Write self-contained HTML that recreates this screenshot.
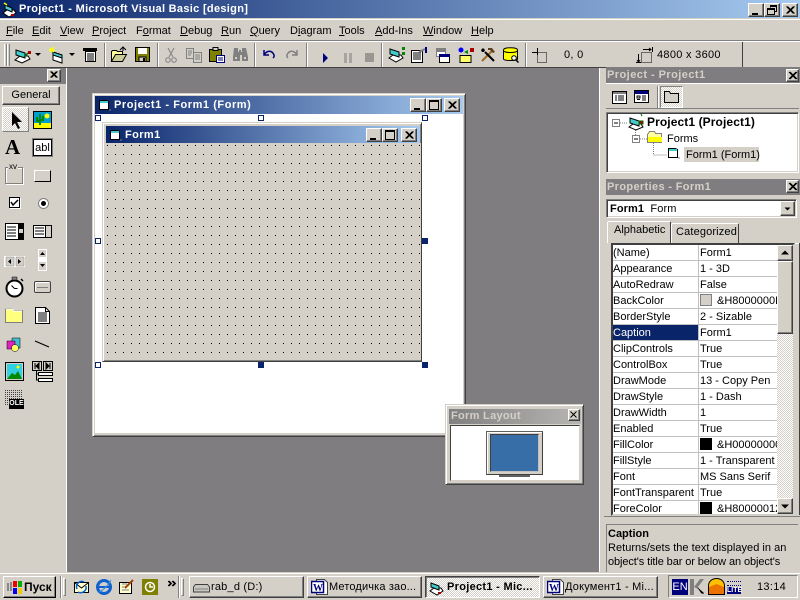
<!DOCTYPE html>
<html><head><meta charset="utf-8"><style>
*{box-sizing:border-box}
html,body{margin:0;padding:0;width:800px;height:600px;overflow:hidden;background:#d4d0c8;font:11px "Liberation Sans","Noto Sans CJK SC",sans-serif;color:#000}
.a{position:absolute}
.t{position:absolute;white-space:nowrap;line-height:14px}
.b{font-weight:bold}
u{text-decoration:underline}
.up{background:#d4d0c8;border:1px solid;border-color:#fff #404040 #404040 #fff;box-shadow:inset -1px -1px 0 #808080}
.sunk{border:1px solid;border-color:#808080 #fff #fff #808080;box-shadow:inset 1px 1px 0 #404040,inset -1px -1px 0 #d4d0c8}
.cb{position:absolute;width:16px;height:14px;background:#d4d0c8;border:1px solid;border-color:#fff #404040 #404040 #fff;box-shadow:inset -1px -1px 0 #808080}
.cb svg,.ic svg{display:block}
.sep{position:absolute;width:2px;border-left:1px solid #808080;border-right:1px solid #fff}
.ic{position:absolute}
.h{position:absolute;width:6px;height:6px;border:1px solid #0a246a;background:#fff}
.hf{background:#0a246a}
.r{position:absolute;left:613px;width:164px;height:16px;border-bottom:1px solid #c0c0c0;background:#fff}
.r b{position:absolute;left:0;top:0;width:86px;height:15px;font-weight:normal;border-right:1px solid #c0c0c0;padding:2px 0 0 0;line-height:13px;white-space:nowrap;overflow:hidden}
.r i{position:absolute;left:87px;top:0;width:77px;height:15px;font-style:normal;padding-top:2px;line-height:13px;white-space:nowrap;overflow:hidden}
.sw{position:absolute;left:0;top:1px;width:12px;height:12px;border:1px solid #808080}
.r i.c{padding-left:17px}
.tb{position:absolute;top:576px;height:22px;background:#d4d0c8;border:1px solid;border-color:#fff #404040 #404040 #fff;box-shadow:inset -1px -1px 0 #808080;white-space:nowrap;overflow:hidden;line-height:20px}
</style></head><body>

<!-- main title -->
<div class="a" style="left:0;top:0;width:800px;height:18px;background:linear-gradient(90deg,#0a246a,#a6caf0)"></div>
<svg class="a" style="left:2px;top:2px" width="16" height="16" viewBox="0 0 16 16"><path d="M1 11L5 8h7l2 3-7 4z" fill="#fff" stroke="#000"/><path d="M3 3l7 3v4l-7-3z" fill="#4cc" stroke="#000"/><path d="M9 12h3v2H9z" fill="#a00"/><path d="M2 1l3 2" stroke="#ff0" stroke-width="1.5"/></svg>
<div class="t b" style="left:19px;top:2px;color:#fff;font-size:11px;letter-spacing:.31px">Project1 - Microsoft Visual Basic [design]</div>
<div class="cb" style="left:748px;top:3px"><svg width="14" height="12"><path d="M3 9h6v2H3z" fill="#000"/></svg></div>
<div class="cb" style="left:764px;top:3px"><svg width="14" height="12"><path d="M5.500 3.500V1.500h6v6h-2M2.500 4.500h7v6h-7z M5 2.500h6M3 5.500h6" fill="none" stroke="#000"/></svg></div>
<div class="cb" style="left:782px;top:3px"><svg width="14" height="12"><path d="M3.500 2.500l7 7M4.500 2.500l7 7M10.500 2.500l-7 7M11.500 2.500l-7 7" stroke="#000"/></svg></div>

<!-- menu -->
<div class="a" style="left:0;top:18px;width:800px;height:1px;background:#d4d0c8"></div>
<div class="a" style="left:0;top:19px;width:800px;height:1px;background:#fff"></div>
<div class="a" style="left:0;top:40px;width:800px;height:1px;background:#808080"></div>
<div class="a" style="left:0;top:41px;width:800px;height:1px;background:#fff"></div>
<div class="t" style="left:6px;top:24px"><u>F</u>ile</div>
<div class="t" style="left:32px;top:24px"><u>E</u>dit</div>
<div class="t" style="left:60px;top:24px"><u>V</u>iew</div>
<div class="t" style="left:92px;top:24px"><u>P</u>roject</div>
<div class="t" style="left:136px;top:24px">F<u>o</u>rmat</div>
<div class="t" style="left:180px;top:24px"><u>D</u>ebug</div>
<div class="t" style="left:221px;top:24px"><u>R</u>un</div>
<div class="t" style="left:250px;top:24px"><u>Q</u>uery</div>
<div class="t" style="left:290px;top:24px">D<u>i</u>agram</div>
<div class="t" style="left:339px;top:24px"><u>T</u>ools</div>
<div class="t" style="left:375px;top:24px"><u>A</u>dd-Ins</div>
<div class="t" style="left:423px;top:24px"><u>W</u>indow</div>
<div class="t" style="left:471px;top:24px"><u>H</u>elp</div>

<!-- toolbar -->
<div class="a" style="left:4px;top:44px;width:3px;height:22px;border-left:1px solid #fff;border-right:1px solid #808080"></div>
<div class="a" style="left:7px;top:44px;width:3px;height:22px;border-left:1px solid #fff;border-right:1px solid #808080"></div>
<div class="a" style="left:0;top:67px;width:800px;height:1px;background:#404040"></div>
<div class="a" style="top:42px;width:1px;height:25px;background:#404040;left:742px"></div>

<svg class="ic" style="left:13px;top:45px" width="20" height="20" viewBox="0 0 20 20"><path d="M2 15l5-4h8l2 3-8 4z" fill="#fff" stroke="#000"/><path d="M3 5l9 3v5l-9-3z" fill="#4cc" stroke="#000"/><path d="M11 12l4-4" stroke="#060" stroke-width="1.500"/><path d="M15 6h3v3h-3z" fill="#a00"/></svg>
<svg class="ic" style="left:35px;top:53px" width="7" height="4"><path d="M0 0h6L3 3z"/></svg>
<svg class="ic" style="left:47px;top:45px" width="20" height="20" viewBox="0 0 20 20"><path d="M6 7l9 3v8l-9-3z" fill="#fff" stroke="#000"/><path d="M6 7l9 3v3l-9-3z" fill="#4cc" stroke="#000"/><path d="M3 3l4 4M7 2L3 7M2 5h6" stroke="#ff0" stroke-width="1.300"/></svg>
<svg class="ic" style="left:69px;top:53px" width="7" height="4"><path d="M0 0h6L3 3z"/></svg>
<svg class="ic" style="left:82px;top:47px" width="16" height="16"><path d="M1.500 1.500h13v2h-13z" fill="#000" stroke="#000"/><path d="M3.500 4.500h10v10h-10z" fill="#fff" stroke="#000"/><path d="M5 7h7M5 9h7M5 11h7M5 13h7" stroke="#000"/></svg>
<div class="sep" style="left:104px;top:43px;height:24px"></div>
<svg class="ic" style="left:110px;top:46px" width="18" height="17"><path d="M1.500 15.500v-10l1-1h4l1 1h5v3" fill="#ff9" stroke="#000"/><path d="M1.500 15.500h11l4-7h-11z" fill="#cc9" stroke="#000"/><path d="M10 4l3-3 3 3M13 1v4" fill="none" stroke="#000"/></svg>
<svg class="ic" style="left:135px;top:47px" width="15" height="15"><path d="M.5.500h14v14H.5z" fill="#808000" stroke="#000"/><path d="M3 1h9v6H3z" fill="#fff"/><path d="M4 10h7v4.500H4z" fill="#d4d0c8" stroke="#000"/><path d="M8 11h2v3H8z"/></svg>
<div class="sep" style="left:157px;top:43px;height:24px"></div>
<svg class="ic" style="left:165px;top:47px" width="12" height="16" stroke="#808080" fill="none"><path d="M3 1l5 9M9 1L4 10"/><circle cx="3" cy="13" r="2.300"/><circle cx="9" cy="13" r="2.300"/></svg>
<svg class="ic" style="left:186px;top:47px" width="16" height="16" stroke="#808080" fill="#d4d0c8"><path d="M.5 1.500h7v10h-7zM7.500 5.500h8v10h-8z"/><path d="M2 4h4M2 6h4M2 8h3M9 8h5M9 10h5M9 12h5" stroke-width="1"/></svg>
<svg class="ic" style="left:209px;top:47px" width="16" height="16"><path d="M.5 2.500h12v12H.5z" fill="#808000" stroke="#000"/><path d="M4 .5h5v3H4z" fill="#d4d0c8" stroke="#000"/><path d="M7.500 8.500h8v7h-8z" fill="#fff" stroke="#00007b"/><path d="M9 11h5M9 13h5" stroke="#00007b"/></svg>
<svg class="ic" style="left:232px;top:47px" width="16" height="15" fill="#808080"><path d="M2 1h4v4h1v-2h2v2h1V1h4l2 9v4h-6V8H8v6H1v-4z"/><path d="M3 10h2v2H3zM12 10h2v2h-2z" fill="#d4d0c8"/></svg>
<div class="sep" style="left:254px;top:43px;height:24px"></div>
<svg class="ic" style="left:262px;top:48px" width="14" height="13" fill="none" stroke="#00007b" stroke-width="1.500"><path d="M2 2v5h5M2 7c3-5 8-5 10 0 .5 1 0 2-1 3"/></svg>
<svg class="ic" style="left:285px;top:48px" width="14" height="13" fill="none" stroke="#808080" stroke-width="1.500"><path d="M12 2v5H7M12 7C9 2 4 2 2 7c-.5 1 0 2 1 3"/></svg>
<div class="sep" style="left:306px;top:43px;height:24px"></div>
<svg class="ic" style="left:322px;top:53px" width="7" height="10"><path d="M1 0l5 5-5 5z" fill="#00007b"/></svg>
<svg class="ic" style="left:344px;top:53px" width="9" height="10"><path d="M0 0h3v10H0zM5 0h3v10H5z" fill="#a8a5a0"/></svg>
<div class="a" style="left:365px;top:53px;width:9px;height:9px;background:#9a9792"></div>
<div class="sep" style="left:381px;top:43px;height:24px"></div>
<svg class="ic" style="left:388px;top:45px" width="18" height="18"><path d="M1 13l4-3h8l2 3-7 4z" fill="#fff" stroke="#000"/><path d="M2 4l9 3v5L2 9z" fill="#4cc" stroke="#000"/><path d="M14 2h3v3h-3zM14 7h3v3h-3z" fill="#080"/></svg>
<svg class="ic" style="left:411px;top:47px" width="17" height="16"><path d="M.5 3.500h11v12H.5z" fill="#fff" stroke="#000"/><path d="M2 6h8M2 8h8M2 10h8M2 12h8" stroke="#000"/><path d="M8 5l6-3" stroke="#808080" stroke-width="2"/><path d="M14 0h2v6h-2z" fill="#00007b"/></svg>
<svg class="ic" style="left:435px;top:48px" width="15" height="15"><path d="M1.500.5h9v3h-9z" fill="#808080" stroke="#808080"/><path d="M1.500 3.500h9v5h-9z" fill="#fff" stroke="#808080"/><path d="M4.500 6.500h10v8h-10z" fill="#fff" stroke="#000"/><path d="M4 6h11v3H4z" fill="#00007b"/></svg>
<svg class="ic" style="left:457px;top:47px" width="17" height="16"><circle cx="4" cy="3" r="2.500" fill="#00f"/><path d="M13 1h4v4h-4z" fill="#a00"/><path d="M3 8.500h11v7H3z" fill="#ff6" stroke="#000"/><path d="M7 5l4-2v4z" fill="#080"/></svg>
<svg class="ic" style="left:480px;top:47px" width="16" height="15"><path d="M2 14L12 4" stroke="#a06a20" stroke-width="2"/><path d="M8 1h4l3 4-2 1-3-3H8z" fill="#604020"/><path d="M14 14L5 5" stroke="#000" stroke-width="2"/><path d="M1 3l2-2 2 2-1 2-2 0z" fill="#000"/></svg>
<svg class="ic" style="left:503px;top:47px" width="16" height="16"><path d="M.5 3c0-3 14-3 14 0v9c0 2-14 2-14 0z" fill="#ff0" stroke="#000"/><path d="M.5 4c2 2 12 2 14 0" fill="none" stroke="#000"/><circle cx="11" cy="11" r="2.300" fill="#fff" stroke="#000"/><path d="M13 13l2.500 2.500" stroke="#000" stroke-width="1.500"/></svg>
<div class="sep" style="left:525px;top:43px;height:24px"></div>
<svg class="ic" style="left:532px;top:48px" width="16" height="16"><path d="M5.500 0v7M0 4.500h5" stroke="#000"/><path d="M5.500 4.500h9v10h-9z" fill="none" stroke="#000" stroke-dasharray="1 1"/></svg>
<div class="t" style="left:564px;top:48px;letter-spacing:.3px">0, 0</div>
<svg class="ic" style="left:636px;top:47px" width="17" height="17"><path d="M5.500 5.500h10v10h-10z" fill="none" stroke="#000" stroke-dasharray="1 1"/><path d="M7 2.500h8M16.500 0v5M13 1l2 1.500-2 1.500M2.500 7v8M0 15.500h5M1 13l1.500 2 1.500-2" fill="none" stroke="#000"/></svg>
<div class="t" style="left:657px;top:48px;letter-spacing:.3px">4800 x 3600</div>

<!-- MDI -->
<div class="a" style="left:68px;top:68px;width:536px;height:504px;background:#807d80"></div>
<div class="a" style="left:66px;top:68px;width:2px;height:504px;background:#fff"></div>
<div class="a" style="left:67px;top:68px;width:1px;height:504px;background:#808080"></div>

<!-- toolbox -->
<div class="a" style="left:0;top:68px;width:66px;height:16px;background:#807d80"></div>
<div class="cb" style="left:47px;top:69px;width:14px;height:13px"><svg width="12" height="11"><path d="M2.500 1.500l6 6M3.500 1.500l6 6M8.500 1.500l-6 6M9.500 1.500l-6 6" stroke="#000"/></svg></div>
<div class="a up" style="left:2px;top:86px;width:58px;height:19px;text-align:center;line-height:17px;">General</div>
<div class="a" style="left:2px;top:107px;width:27px;height:25px;border:1px solid;border-color:#fff #808080 #808080 #fff;background-image:repeating-conic-gradient(#fff 0 25%,#d4d0c8 0 50%);background-size:2px 2px"></div>
<svg class="ic" style="left:11px;top:112px" width="13" height="17"><path d="M1 0v14l3-3 3 6 2-1-3-6h5z"/></svg>
<svg class="ic" style="left:33px;top:111px" width="19" height="18"><path d="M.5.500h18v17H.5z" fill="#00a0d0" stroke="#000"/><path d="M1 12h17v5H1z" fill="#ff0"/><circle cx="14" cy="5" r="2.500" fill="#ff0"/><path d="M7 3v11M4 6v4h3M10 5v4H7" stroke="#080" stroke-width="2" fill="none"/></svg>
<div class="t" style="left:5px;top:137px;font:bold 21px/20px 'Liberation Serif',serif">A</div>
<div class="a" style="left:33px;top:139px;width:19px;height:17px;border:1px solid #000;box-shadow:inset 0 0 0 1px #fff;background:#fff;font-size:11px;line-height:16px;text-align:center;outline:1px solid #808080">abl</div>
<div class="a" style="left:5px;top:167px;width:18px;height:17px;border:1px solid #808080;box-shadow:1px 1px 0 #fff,inset 1px 1px 0 #fff"></div>
<div class="t" style="left:8px;top:163px;font-size:8px;background:#d4d0c8;line-height:8px;padding:0 1px">xv</div>
<div class="a" style="left:34px;top:170px;width:17px;height:12px;background:#d4d0c8;border:1px solid;border-color:#fff #000 #000 #fff"></div>
<div class="a" style="left:9px;top:197px;width:11px;height:11px;background:#fff;border:1px solid #000;box-shadow:1px 1px 0 #fff"></div>
<svg class="ic" style="left:10px;top:199px" width="9" height="8"><path d="M1 3l2 3 5-5" fill="none" stroke="#000" stroke-width="1.500"/></svg>
<div class="a" style="left:38px;top:198px;width:11px;height:11px;border-radius:50%;background:#fff;border:1px solid #808080"></div>
<div class="a" style="left:41px;top:201px;width:5px;height:5px;border-radius:50%;background:#000"></div>
<svg class="ic" style="left:5px;top:223px" width="19" height="17"><path d="M.5.500h18v16H.5z" fill="#fff" stroke="#000"/><path d="M13 0h6v17h-6z"/><path d="M2 4h9M2 7h9M2 10h9M2 13h9" stroke="#000"/><path d="M14 6h4v4h-4z" fill="#d4d0c8"/></svg>
<svg class="ic" style="left:33px;top:225px" width="19" height="13"><path d="M.5.500h18v12H.5z" fill="#fff" stroke="#000"/><path d="M13 1h5v11h-5z" fill="#d4d0c8"/><path d="M12.500 1v11" stroke="#000"/><path d="M2 3h9M2 6h9M2 9h9" stroke="#000"/></svg>
<svg class="ic" style="left:4px;top:256px" width="21" height="11"><path d="M0 0h21v11H0z" fill="#fff"/><path d="M2 1h8v9H2zM12 1h8v9h-8z" fill="#d4d0c8" stroke="#808080" stroke-width=".5"/><path d="M7 3v5L4 5.500zM14 3v5l3-2.500z"/></svg>
<svg class="ic" style="left:38px;top:249px" width="9" height="22"><path d="M0 0h9v22H0z" fill="#fff"/><path d="M1 1h7v7H1zM1 13h7v8H1z" fill="#d4d0c8"/><path d="M4.500 3L7 6H2zM2 15h5l-2.500 3z"/></svg>
<svg class="ic" style="left:5px;top:276px" width="19" height="22"><circle cx="9.500" cy="12.500" r="8" fill="#fff" stroke="#000" stroke-width="2"/><path d="M9.500 12.500l-3-3M9.500 12.500h3" stroke="#000"/><path d="M7 1h5v3H7z" fill="#808080" stroke="#000" stroke-width=".5"/><path d="M16 3l2 2" stroke="#000" stroke-width="1.500"/></svg>
<div class="a" style="left:34px;top:281px;width:17px;height:12px;background:#d4d0c8;border:1px solid #404040;border-radius:2px;box-shadow:inset 1px 1px 0 #fff"></div>
<div class="a" style="left:37px;top:287px;width:11px;height:1px;background:#808080"></div>
<svg class="ic" style="left:5px;top:308px" width="18" height="15"><path d="M.5 14.500v-13l1-1h6l1 2h9v12z" fill="#ffff80" stroke="#808080"/><path d="M1 1h7v2h9" fill="none" stroke="#fff"/></svg>
<svg class="ic" style="left:35px;top:307px" width="15" height="17"><path d="M.5.500h10l4 4v12H.5z" fill="#fff" stroke="#000"/><path d="M10.500.500v4h4" fill="none" stroke="#000"/><path d="M3 6h9M3 8h9M3 10h9M3 12h9M3 14h9" stroke="#000"/></svg>
<svg class="ic" style="left:6px;top:337px" width="16" height="16"><path d="M6 1h8v10H6z" fill="#40c0d0" stroke="#000" stroke-width=".5"/><path d="M1 4h8v8H1z" fill="#e020c0" stroke="#000" stroke-width=".5"/><circle cx="9" cy="11" r="3.500" fill="#ff6" stroke="#000" stroke-width=".5"/></svg>
<svg class="ic" style="left:34px;top:340px" width="17" height="9"><path d="M1 1l14 6" stroke="#000" stroke-width="1.200"/></svg>
<svg class="ic" style="left:5px;top:362px" width="19" height="19"><path d="M.5.500h18v18H.5z" fill="#d4d0c8" stroke="#000"/><path d="M2 2h15v15H2z" fill="#30d0e0"/><path d="M2 17l5-6 3 2 3-4 4 8z" fill="#080"/><circle cx="13" cy="5" r="1.500" fill="#ff0"/></svg>
<svg class="ic" style="left:32px;top:361px" width="21" height="21"><path d="M.5.500h9v9h-9zM11.500.500h9v9h-9z" fill="#d4d0c8" stroke="#000"/><path d="M3 2v6M7 2v6L4 5zM14 2v6l3-3zM18 2v6" stroke="#000" fill="#000"/><path d="M4.500 10v9h2M4.500 13h2" stroke="#000" fill="none"/><path d="M6.500 11.500h14v3h-14zM6.500 17.500h14v3h-14z" fill="#fff" stroke="#000"/></svg>
<svg class="ic" style="left:5px;top:390px" width="20" height="19"><defs><pattern id="dt" width="2" height="2" patternUnits="userSpaceOnUse"><rect width="1" height="1" fill="#404040"/></pattern></defs><path d="M0 0h17v9H4v6H0z" fill="url(#dt)"/></svg>
<div class="a b" style="left:9px;top:399px;width:15px;height:10px;background:#000;color:#fff;font-size:7px;line-height:10px;text-align:center;white-space:nowrap">OLE</div>

<!-- project form window -->
<div class="a up" style="left:92px;top:93px;width:374px;height:344px;background:#d4d0c8;border-color:#d4d0c8 #404040 #404040 #d4d0c8;box-shadow:inset 1px 1px 0 #fff,inset -1px -1px 0 #808080"></div>
<div class="a" style="left:95px;top:96px;width:368px;height:18px;background:linear-gradient(90deg,#0a246a,#a6caf0)"></div>
<div class="a" style="left:95px;top:114px;width:368px;height:319px;background:#fff"></div>
<svg class="ic" style="left:98px;top:99px" width="14" height="13"><path d="M1.500 1.500h7l2 1v8h-9z" fill="#fff" stroke="#000"/><path d="M2 2h8v2H2z" fill="#4cc"/><path d="M11 11h2" stroke="#808080"/></svg>
<div class="t b" style="left:114px;top:98px;color:#fff;font-size:11px;letter-spacing:.55px">Project1 - Form1 (Form)</div>
<div class="cb" style="left:410px;top:98px"><svg width="14" height="12"><path d="M3 9h6v2H3z"/></svg></div>
<div class="cb" style="left:426px;top:98px"><svg width="14" height="12"><path d="M2.500 1.500h9v9h-9zM3 2.500h8" fill="none" stroke="#000"/></svg></div>
<div class="cb" style="left:444px;top:98px"><svg width="14" height="12"><path d="M3.500 2.500l7 7M4.500 2.500l7 7M10.500 2.500l-7 7M11.500 2.500l-7 7" stroke="#000"/></svg></div>

<!-- form -->
<div class="a" style="left:102px;top:122px;width:320px;height:240px;background:#d4d0c8;border:1px solid;border-color:#d4d0c8 #404040 #404040 #d4d0c8;box-shadow:inset 1px 1px 0 #fff,inset -1px -1px 0 #808080"></div>
<div class="a" style="left:106px;top:126px;width:314px;height:17px;background:linear-gradient(90deg,#0a246a,#a6caf0)"></div>
<svg class="ic" style="left:109px;top:129px" width="14" height="13"><path d="M1.500 1.500h7l2 1v8h-9z" fill="#fff" stroke="#000"/><path d="M2 2h8v2H2z" fill="#4cc"/><path d="M11 11h2" stroke="#808080"/></svg>
<div class="t b" style="left:125px;top:128px;color:#fff;letter-spacing:.4px">Form1</div>
<div class="cb" style="left:366px;top:128px"><svg width="14" height="12"><path d="M3 9h6v2H3z"/></svg></div>
<div class="cb" style="left:382px;top:128px"><svg width="14" height="12"><path d="M2.500 1.500h9v9h-9zM3 2.500h8" fill="none" stroke="#000"/></svg></div>
<div class="cb" style="left:401px;top:128px"><svg width="14" height="12"><path d="M3.500 2.500l7 7M4.500 2.500l7 7M10.500 2.500l-7 7M11.500 2.500l-7 7" stroke="#000"/></svg></div>
<svg class="a" style="left:105px;top:143px" width="316" height="217"><defs><pattern id="g" x="0" y="0" width="8" height="9" patternUnits="userSpaceOnUse"><rect x="2" y="2" width="1" height="1" fill="#000"/></pattern></defs><rect width="316" height="217" fill="#d4d0c8"/><rect width="316" height="217" fill="url(#g)"/></svg>
<div class="h" style="left:95px;top:115px"></div>
<div class="h" style="left:258px;top:115px"></div>
<div class="h" style="left:422px;top:115px"></div>
<div class="h" style="left:95px;top:238px"></div>
<div class="h hf" style="left:422px;top:238px"></div>
<div class="h" style="left:95px;top:362px"></div>
<div class="h hf" style="left:258px;top:362px"></div>
<div class="h hf" style="left:422px;top:362px"></div>

<!-- form layout -->
<div class="a" style="left:445px;top:404px;width:139px;height:81px;background:#d4d0c8;border:1px solid;border-color:#d4d0c8 #404040 #404040 #d4d0c8;box-shadow:inset 1px 1px 0 #fff,inset -1px -1px 0 #808080"></div>
<div class="a" style="left:449px;top:409px;width:132px;height:15px;background:linear-gradient(90deg,#808080,#b8b6b4)"></div>
<div class="t b" style="left:451px;top:409px;color:#d4d0c8;letter-spacing:.3px">Form Layout</div>
<div class="cb" style="left:568px;top:409px;width:12px;height:12px;border-color:#fff #404040 #404040 #fff"><svg width="10" height="10"><path d="M1.500 1.500l6 6M7.500 1.500l-6 6" stroke="#000"/></svg></div>
<div class="a" style="left:450px;top:425px;width:130px;height:56px;background:#fff;border:1px solid;border-color:#404040 #d4d0c8 #d4d0c8 #404040"></div>
<div class="a" style="left:486px;top:431px;width:57px;height:44px;background:#d4d0c8;border:1px solid;border-color:#606060 #404040 #404040 #606060;box-shadow:inset 1px 1px 0 #fff"></div>
<div class="a" style="left:490px;top:434px;width:49px;height:38px;background:#386ea8;border:1px solid;border-color:#404040 #c0c0c0 #c0c0c0 #404040"></div>
<div class="a" style="left:499px;top:475px;width:31px;height:2px;background:#606060"></div>

<!-- project panel -->
<div class="a" style="left:599px;top:68px;width:201px;height:504px;background:#d4d0c8;border-left:1px solid #fff"></div>
<div class="a" style="left:606px;top:67px;width:194px;height:16px;background:#807d80"></div>
<div class="t b" style="left:607px;top:68px;color:#d4d0c8;letter-spacing:.45px">Project - Project1</div>
<div class="cb" style="left:786px;top:69px;width:13px;height:13px;"><svg width="11" height="11"><path d="M2 2l7 7M3 2l7 7M9 2l-7 7M10 2l-7 7" stroke="#000"/></svg></div>
<div class="a" style="left:606px;top:83px;width:194px;height:1px;background:#fff"></div>
<svg class="ic" style="left:612px;top:91px" width="15" height="13"><path d="M.5.500h14v12H.5z" fill="#fff" stroke="#000"/><path d="M1 1h13v2H1z" fill="#808080"/><path d="M3 5h2M3 7h2M3 9h2M6 5h6M6 7h6M6 9h6" stroke="#000"/></svg>
<svg class="ic" style="left:634px;top:90px" width="15" height="13"><path d="M.5.500h14v12H.5z" fill="#fff" stroke="#000"/><path d="M1 1h13v3H1z" fill="#00007b"/><path d="M3 6h3v2H3zM3 9.500h3M8 6h4M8 8h4M8 10h4" stroke="#000" fill="none"/></svg>
<div class="sep" style="left:657px;top:86px;height:22px"></div>
<div class="a" style="left:660px;top:86px;width:23px;height:22px;border:1px solid;border-color:#808080 #fff #fff #808080;background-image:repeating-conic-gradient(#fff 0 25%,#d4d0c8 0 50%);background-size:2px 2px"></div>
<svg class="ic" style="left:664px;top:90px" width="15" height="13"><path d="M.5 12.500v-11h5l1 2h8v9z" fill="#d4d0c8" stroke="#000"/></svg>
<div class="a" style="left:606px;top:108px;width:193px;height:1px;background:#808080"></div>
<div class="a sunk" style="left:606px;top:112px;width:193px;height:61px;background:#fff"></div>
<svg class="a" style="left:600px;top:110px" width="90" height="55" fill="none"><path d="M20 13h8M35.500 20v5M40 29h7M53.500 33v12h13" stroke="#808080" stroke-dasharray="1 1"/><path d="M12.500 9.500h7v7h-7zM32.500 25.500h7v7h-7z" fill="#fff" stroke="#808080"/><path d="M14 13h4M34 29h4" stroke="#000"/></svg>
<svg class="ic" style="left:628px;top:113px" width="18" height="18"><path d="M1 14l4-3h8l2 3-7 3z" fill="#fff" stroke="#000"/><path d="M2 5l9 3v5L2 10z" fill="#4cc" stroke="#000"/><path d="M13 1l1 2M11 8h4v3h-4z" fill="#a00" stroke="#060"/></svg>
<div class="t b" style="left:647px;top:115px;font-size:12px;letter-spacing:.1px">Project1 (Project1)</div>
<svg class="ic" style="left:647px;top:130px" width="16" height="14"><path d="M.5 4.500l2-3h5l1 2h6v9H.5z" fill="#ffffa0" stroke="#808080"/><path d="M1 7h14v5H1z" fill="#ff0"/></svg>
<div class="t" style="left:667px;top:132px">Forms</div>
<svg class="ic" style="left:667px;top:147px" width="14" height="13"><path d="M1.500 1.500h7l2 1v8h-9z" fill="#fff" stroke="#000"/><path d="M2 2h8v2H2z" fill="#4cc"/><path d="M11 11h2" stroke="#808080"/></svg>
<div class="a" style="left:684px;top:147px;width:75px;height:15px;background:#d4d0c8"></div>
<div class="t" style="left:686px;top:148px">Form1 (Form1)</div>

<!-- properties -->
<div class="a" style="left:606px;top:179px;width:194px;height:16px;background:#807d80"></div>
<div class="t b" style="left:607px;top:180px;color:#d4d0c8;letter-spacing:.35px">Properties - Form1</div>
<div class="cb" style="left:786px;top:180px;width:13px;height:13px;"><svg width="11" height="11"><path d="M2 2l7 7M3 2l7 7M9 2l-7 7M10 2l-7 7" stroke="#000"/></svg></div>
<div class="a sunk" style="left:606px;top:199px;width:191px;height:19px;background:#fff"></div>
<div class="t" style="left:610px;top:202px;letter-spacing:.1px"><b>Form1</b>&nbsp; Form</div>
<div class="cb" style="left:780px;top:201px;width:15px;height:15px"><svg width="13" height="13"><path d="M3.500 5.500h6L6.500 8.500z"/></svg></div>
<div class="a" style="left:607px;top:221px;width:64px;height:24px;background:#d4d0c8;border:1px solid;border-color:#fff #404040 transparent #fff;border-bottom:0;border-radius:2px 2px 0 0"></div>
<div class="t" style="left:614px;top:223px">Alphabetic</div>
<div class="a" style="left:671px;top:223px;width:68px;height:20px;background:#d4d0c8;border:1px solid;border-color:#fff #404040 transparent #fff;border-bottom:0;border-radius:2px 2px 0 0"></div>
<div class="t" style="left:676px;top:225px;letter-spacing:.15px">Categorized</div>
<div class="a" style="left:607px;top:243px;width:193px;height:1px;background:#fff"></div>
<div class="a" style="left:607px;top:243px;width:64px;height:2px;background:#d4d0c8"></div>
<div class="a" style="left:611px;top:243px;width:184px;height:273px;background:#d4d0c8;border:2px solid;border-color:#404040 #d4d0c8 #d4d0c8 #404040;outline:0"></div>
<div class="a" style="left:799px;top:243px;width:1px;height:272px;background:#404040"></div>
<div class="a" style="left:604px;top:516px;width:196px;height:1px;background:#808080"></div>

<div class="r" style="top:245px"><b>(Name)</b><i>Form1</i></div>
<div class="r" style="top:261px"><b>Appearance</b><i>1 - 3D</i></div>
<div class="r" style="top:277px"><b>AutoRedraw</b><i>False</i></div>
<div class="r" style="top:293px"><b>BackColor</b><i class="c"><span class="sw" style="background:#d4d0c8"></span>&amp;H8000000F</i></div>
<div class="r" style="top:309px"><b>BorderStyle</b><i>2 - Sizable</i></div>
<div class="r" style="top:325px"><b style="background:#0a246a;color:#fff">Caption</b><i>Form1</i></div>
<div class="r" style="top:341px"><b>ClipControls</b><i>True</i></div>
<div class="r" style="top:357px"><b>ControlBox</b><i>True</i></div>
<div class="r" style="top:373px"><b>DrawMode</b><i>13 - Copy Pen</i></div>
<div class="r" style="top:389px"><b>DrawStyle</b><i>1 - Dash</i></div>
<div class="r" style="top:405px"><b>DrawWidth</b><i>1</i></div>
<div class="r" style="top:421px"><b>Enabled</b><i>True</i></div>
<div class="r" style="top:437px"><b>FillColor</b><i class="c"><span class="sw" style="background:#000;border-color:#000"></span>&amp;H00000000</i></div>
<div class="r" style="top:453px"><b>FillStyle</b><i>1 - Transparent</i></div>
<div class="r" style="top:469px"><b>Font</b><i>MS Sans Serif</i></div>
<div class="r" style="top:485px"><b>FontTransparent</b><i>True</i></div>
<div class="r" style="top:501px;height:13px;border:0;overflow:hidden"><b>ForeColor</b><i class="c"><span class="sw" style="background:#000;border-color:#000"></span>&amp;H80000012</i></div>

<!-- scrollbar -->
<div class="a" style="left:777px;top:245px;width:16px;height:269px;background-image:repeating-conic-gradient(#fff 0 25%,#d4d0c8 0 50%);background-size:2px 2px"></div>
<div class="cb" style="left:777px;top:245px;width:16px;height:16px"><svg width="14" height="14"><path d="M7 4.500l4 4H3z"/></svg></div>
<div class="a up" style="left:777px;top:261px;width:16px;height:73px"></div>
<div class="cb" style="left:777px;top:498px;width:16px;height:16px"><svg width="14" height="14"><path d="M3 5.500h8l-4 4z"/></svg></div>

<!-- description -->
<div class="a" style="left:606px;top:524px;width:192px;height:48px;border-top:1px solid #808080;border-left:1px solid #808080;overflow:hidden"></div>
<div class="t b" style="left:608px;top:527px">Caption</div>
<div class="t" style="left:608px;top:541px;letter-spacing:.03px">Returns/sets the text displayed in an</div>
<div class="t" style="left:608px;top:555px;letter-spacing:-.1px">object's title bar or below an object's</div>

<!-- taskbar -->
<div class="a" style="left:0;top:572px;width:800px;height:28px;background:#d4d0c8;border-top:1px solid #d4d0c8;box-shadow:inset 0 1px 0 #fff"></div>
<div class="tb b" style="left:3px;width:53px;font-size:12px;padding-left:20px;border-color:#fff #000 #000 #fff">Пуск</div>
<svg class="ic" style="left:7px;top:580px" width="16" height="14"><path d="M0 3h2v8H0zM3 2h2v9H3z" fill="#888"/><path d="M6 1h4v6H6z" fill="#e00"/><path d="M11 1h4v6h-4z" fill="#0a0"/><path d="M6 8h4v6H6z" fill="#00e"/><path d="M11 8h4v6h-4z" fill="#ec0"/></svg>
<div class="a" style="left:60px;top:576px;width:1px;height:22px;background:#808080;box-shadow:1px 0 0 #fff"></div>
<div class="a" style="left:63px;top:578px;width:3px;height:18px;border:1px solid;border-color:#fff #808080 #808080 #fff"></div>
<svg class="ic" style="left:73px;top:578px" width="17" height="17"><path d="M1.500 4.500h14v10h-14z" fill="#ffffd0" stroke="#000"/><path d="M2 5l6.500 5 6.500-5" fill="none" stroke="#000"/><path d="M4 11C2 6 7 2 11 4M13 8c1 5-4 8-8 6" fill="none" stroke="#0060d0" stroke-width="1.500"/></svg>
<svg class="ic" style="left:96px;top:578px" width="17" height="17"><ellipse cx="8" cy="9" rx="6.500" ry="6.500" fill="none" stroke="#1060d0" stroke-width="3"/><path d="M3 9h10" stroke="#1060d0" stroke-width="2"/><path d="M3 14C8 12 13 6 15 2" fill="none" stroke="#3090e0"/></svg>
<svg class="ic" style="left:119px;top:578px" width="16" height="17"><path d="M.5 4.500h12v11H.5z" fill="#ffffd0" stroke="#000"/><path d="M6 10L14 2" stroke="#a04000" stroke-width="2"/><path d="M3 6h5M3 9h3M3 12h7" stroke="#808080"/></svg>
<div class="a" style="left:142px;top:579px;width:16px;height:16px;background:#808000"></div>
<svg class="ic" style="left:144px;top:581px" width="12" height="12" fill="none" stroke="#fff" stroke-width="1.500"><circle cx="6" cy="6" r="4.500"/><path d="M6 3v3h3"/></svg>
<svg class="ic" style="left:168px;top:580px" width="8" height="7" fill="none" stroke="#000"><path d="M0 1l2.500 2.500L0 6M1 1l2.500 2.500L1 6M4 1l2.500 2.500L4 6M5 1l2.500 2.500L5 6"/></svg>
<div class="a" style="left:178px;top:576px;width:1px;height:22px;background:#808080;box-shadow:1px 0 0 #fff"></div>
<div class="a" style="left:181px;top:578px;width:3px;height:18px;border:1px solid;border-color:#fff #808080 #808080 #fff"></div>

<div class="tb" style="left:189px;width:115px;padding-left:21px;letter-spacing:.2px">rab_d (D:)</div>
<svg class="ic" style="left:193px;top:584px" width="17" height="9"><path d="M.5 3l2-2.500h12l2 2.500v5h-16z" fill="#c8c8c0" stroke="#404040"/><path d="M2 5h13" stroke="#808080"/></svg>
<div class="tb" style="left:307px;width:115px;padding-left:21px;letter-spacing:.15px">Методичка зао...</div>
<div class="tb" style="left:425px;width:115px;padding-left:21px;font-weight:bold;letter-spacing:.3px;border-color:#404040 #fff #fff #404040;box-shadow:inset 1px 1px 0 #808080;background-image:repeating-conic-gradient(#fff 0 25%,#d4d0c8 0 50%);background-size:2px 2px">Project1 - Mic...</div>
<svg class="ic" style="left:429px;top:579px" width="16" height="17"><path d="M1 12l4-3h7l2 3-6 4z" fill="#fff" stroke="#000"/><path d="M2 4l8 3v4L2 8z" fill="#4cc" stroke="#000"/><path d="M9 13h3v2H9z" fill="#a00"/></svg>
<div class="tb" style="left:543px;width:115px;padding-left:21px;letter-spacing:.2px">Документ1 - Mi...</div>
<svg class="ic" style="left:311px;top:579px" width="17" height="16"><path d="M5.500.500h8l3 3v12h-11z" fill="#fff" stroke="#404040"/><path d="M.5 2.500h12v11H.5z" fill="#fff" stroke="#00007b" stroke-width="1.500"/><text x="2" y="12" font-family="Liberation Serif" font-size="10" font-weight="bold" fill="#00007b">W</text></svg>
<svg class="ic" style="left:547px;top:579px" width="17" height="16"><path d="M5.500.500h8l3 3v12h-11z" fill="#fff" stroke="#404040"/><path d="M.5 2.500h12v11H.5z" fill="#fff" stroke="#00007b" stroke-width="1.500"/><text x="2" y="12" font-family="Liberation Serif" font-size="10" font-weight="bold" fill="#00007b">W</text></svg>

<div class="a" style="left:668px;top:575px;width:130px;height:23px;border:1px solid;border-color:#808080 #fff #fff #808080"></div>
<div class="a" style="left:672px;top:579px;width:16px;height:16px;background:#00007b;color:#fff;text-align:center;line-height:16px;font-size:11px">EN</div>
<svg class="ic" style="left:690px;top:579px" width="16" height="16"><path d="M0 0h4v16H0z" fill="#808080"/><path d="M4 8l6-8h4L8 8l2 3z" fill="#808080"/><path d="M7 8l7 6-1 1-2-1z"/></svg>
<svg class="ic" style="left:708px;top:578px" width="17" height="17"><path d="M.5 8c0-5 4-7.500 8-7.500s8 2.500 8 7.500v8.500H.5z" fill="#ffc000" stroke="#000"/><path d="M1 9l7.500-3L16 9v7H1z" fill="#e04000" opacity=".6"/></svg>
<div class="a" style="left:727px;top:581px;width:14px;height:5px;background:#d4d0c8;border-top:1px dotted #00007b;border-bottom:1px dotted #00007b"></div>
<div class="a" style="left:727px;top:587px;width:14px;height:7px;background:#00007b;color:#fff;font:bold 7px/7px 'Liberation Sans',sans-serif;text-align:center">LITE</div>
<div class="t" style="left:757px;top:580px;letter-spacing:.3px">13:14</div>
</body></html>
